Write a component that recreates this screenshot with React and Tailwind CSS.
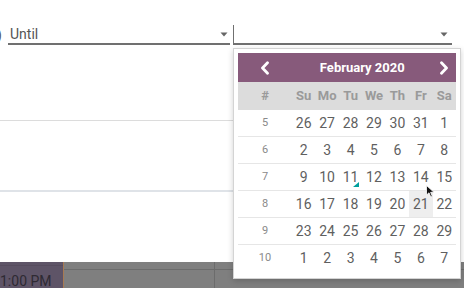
import React from 'react';

const WEEKDAYS = ['Su', 'Mo', 'Tu', 'We', 'Th', 'Fr', 'Sa'];

const WEEKS = [
  { n: 5, days: [26, 27, 28, 29, 30, 31, 1] },
  { n: 6, days: [2, 3, 4, 5, 6, 7, 8] },
  { n: 7, days: [9, 10, 11, 12, 13, 14, 15] },
  { n: 8, days: [16, 17, 18, 19, 20, 21, 22] },
  { n: 9, days: [23, 24, 25, 26, 27, 28, 29] },
  { n: 10, days: [1, 2, 3, 4, 5, 6, 7] },
];

function Caret() {
  return (
    <svg width="8" height="5" viewBox="0 0 8 5">
      <path d="M0.5 0.5 L7.5 0.5 L4 4.5 Z" fill="#666" />
    </svg>
  );
}

function Chevron({ dir }) {
  return (
    <svg width="10" height="14" viewBox="0 0 10 14">
      <polyline
        points={dir === 'left' ? '7.5,1.8 2.5,7 7.5,12.2' : '2.5,1.8 7.5,7 2.5,12.2'}
        fill="none"
        stroke="#fff"
        strokeWidth="2.8"
        strokeLinecap="round"
        strokeLinejoin="round"
      />
    </svg>
  );
}

function DatePicker() {
  return (
    <div className="absolute left-[233px] top-[48px] w-[228px] bg-white border border-[#d4d4d4] shadow-[0_2px_6px_rgba(0,0,0,0.18)] px-[4px] pt-[4px] pb-[6px]">
      {/* Month header: prev over the week column, title over Su–Fr, next over Sa */}
      <div className="h-[29px] bg-[#875a7b] grid grid-cols-[54px_repeat(7,1fr)] items-center text-white">
        <span className="flex justify-center"><Chevron dir="left" /></span>
        <span className="col-span-6 text-center text-[13px] font-bold">February 2020</span>
        <span className="flex justify-center"><Chevron dir="right" /></span>
      </div>

      {/* Weekday header */}
      <div className="h-[28px] bg-[#dcdcdc] grid grid-cols-[54px_repeat(7,1fr)] items-center text-[13px] font-bold text-[#9a9a9a]">
        <span className="text-center">#</span>
        {WEEKDAYS.map((d) => (
          <span key={d} className="text-center">{d}</span>
        ))}
      </div>

      {/* Weeks */}
      {WEEKS.map((w, i) => (
        <div
          key={w.n}
          className={`h-[27px] grid grid-cols-[54px_repeat(7,1fr)] items-center text-[14px] text-[#5f5f5f] ${i < WEEKS.length - 1 ? 'border-b border-[#e6e6e6]' : ''}`}
        >
          <span className="text-center text-[11px] text-[#8a8a8a]">{w.n}</span>
          {w.days.map((d, j) => {
            const today = w.n === 7 && d === 11;
            const active = w.n === 8 && d === 21;
            return (
              <span
                key={j}
                className={`h-full flex items-center justify-center ${active ? 'bg-[#eeeeee]' : ''}`}
              >
                <span className="relative">
                  {d}
                  {today && (
                    <span className="absolute right-[-1px] bottom-[1px] w-0 h-0 border-l-[6px] border-l-transparent border-b-[5px] border-b-[#00a09d]" />
                  )}
                </span>
              </span>
            );
          })}
        </div>
      ))}
    </div>
  );
}

export default function App() {
  return (
    <div className="relative w-[464px] h-[288px] overflow-hidden bg-white font-['Roboto',sans-serif] flex flex-col">
      {/* Inputs row */}
      <div className="h-[45px] flex items-end">
        <span className="w-[8px] pb-[3px] text-[14px] text-[#555] leading-none -ml-[3px]">)</span>
        <div className="ml-[3px] w-[222px] h-[20px] border-b-2 border-[#707070] flex items-center justify-between pl-[2px] pr-[2px]">
          <span className="text-[14px] text-[#555]">Until</span>
          <Caret />
        </div>
        <div className="ml-[3px] w-[219px] h-[20px] border-l border-b-2 border-[#707070] flex items-center justify-end pr-[4px]">
          <Caret />
        </div>
      </div>

      {/* Form body */}
      <div className="h-[75px]" />
      <div className="w-[233px] h-px bg-[#dcdcdc]" />
      <div className="h-[69px]" />
      <div className="w-[233px] h-[2px] bg-[#dfe3e8]" />
      <div className="flex-1" />

      {/* Calendar behind dialog */}
      <div className="h-[26px] bg-[#7f7f7f] flex">
        <div className="w-[64px] bg-[#5e5467] border-r border-[#a87a52] flex flex-col">
          <div className="h-[8px] border-b border-[#574d5f]" />
          <span className="pt-[8px] text-[14px] leading-none text-[#2e2a33] whitespace-nowrap">1:00 PM</span>
        </div>
        <div className="w-[151px] border-r border-[#6c6c6c] flex flex-col">
          <div className="h-[8px] border-b border-[#6c6c6c]" />
        </div>
        <div className="flex-1 flex flex-col">
          <div className="h-[8px] border-b border-[#6c6c6c]" />
        </div>
      </div>

      <DatePicker />

      {/* Mouse pointer */}
      <svg className="absolute left-[426px] top-[185px]" width="9" height="13" viewBox="0 0 9 13">
        <path d="M0.5 0.5 L0.5 10 L3 7.8 L4.8 12 L6.3 11.3 L4.6 7.3 L8 7.3 Z" fill="#111" stroke="#fff" strokeWidth="0.8" />
      </svg>
    </div>
  );
}
